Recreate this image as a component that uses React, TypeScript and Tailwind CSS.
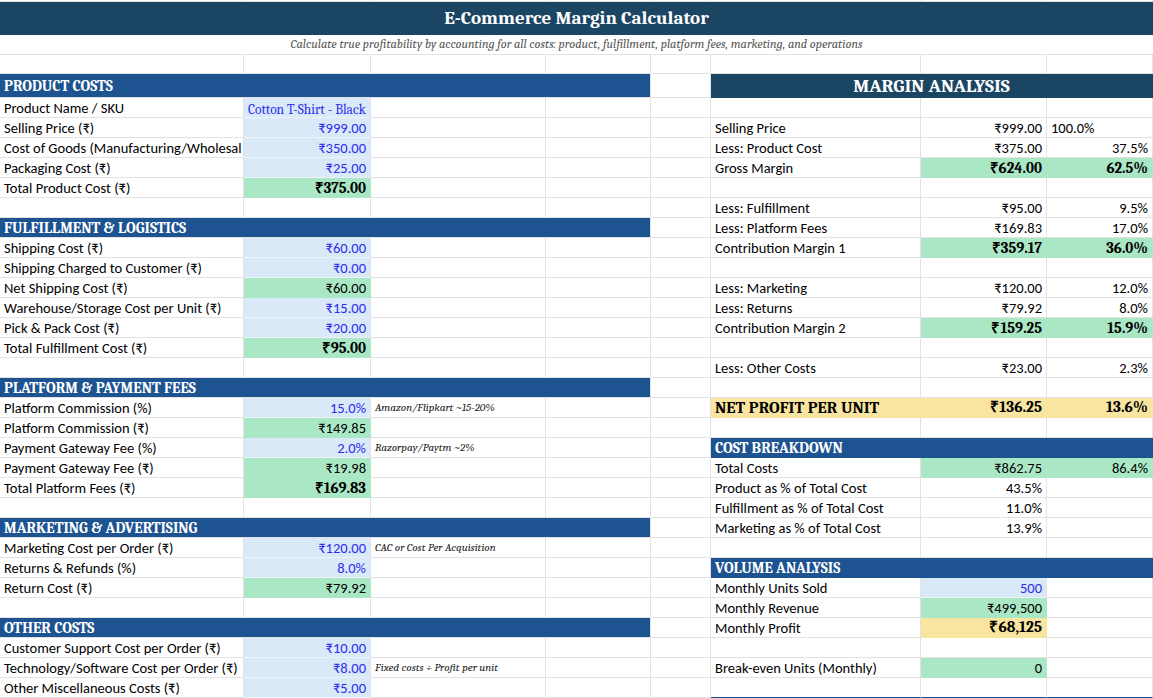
import React from "react";

// ── Grid template (matches sheet column widths) ───────────────────

const COLS =
  "grid grid-cols-[244px_127px_175px_105px_60px_210px_126px_106px]";

type Kind =
  | ""
  | "l"
  | "i"
  | "is"
  | "c"
  | "t"
  | "n"
  | "v"
  | "vl"
  | "h"
  | "rh"
  | "mh"
  | "y"
  | "yv"
  | "end";

type C = [Kind, string?];

const BASE =
  "flex items-center overflow-hidden whitespace-nowrap px-1 pt-[1px] border-r border-b";
const SERIF = "font-[Caladea,'Liberation_Serif',serif]";

const KIND: Record<Kind, string> = {
  "": "border-[#e2e2e2]",
  l: "border-[#e2e2e2] text-black",
  i: "bg-[#d9e9f7] border-r-[#e2e2e2] border-b-[#edf3f9] justify-end text-[#2d2df0]",
  is: `bg-[#d9e9f7] border-r-[#e2e2e2] border-b-[#edf3f9] pt-[4px] text-[#2d2df0] text-[13.5px] ${SERIF}`,
  c: "bg-[#aae8c5] border-transparent justify-end text-black",
  t: `bg-[#aae8c5] border-transparent justify-end text-black font-bold text-[15px] ${SERIF}`,
  n: `border-[#e2e2e2] italic text-[11.2px] text-[#222] ${SERIF}`,
  v: "border-[#e2e2e2] justify-end text-black",
  vl: "border-[#e2e2e2] text-black",
  h: `col-span-4 bg-[#1c5390] border-[#e2e2e2] text-white font-bold text-[15px] ${SERIF}`,
  rh: `col-span-3 bg-[#1c5390] border-transparent text-white font-bold text-[15px] ${SERIF}`,
  mh: `col-span-3 bg-[#1a4563] border-transparent justify-center text-white font-bold text-[19px] ${SERIF}`,
  y: `bg-[#f9e5a0] border-transparent text-black font-bold text-[16.5px] ${SERIF}`,
  yv: `bg-[#f9e5a0] border-transparent justify-end text-black font-bold text-[15.5px] ${SERIF}`,
  end: "border-[#e2e2e2] border-b-[#1c5390]",
};

function Cell({ c }: { c: C }) {
  const [kind, text] = c;
  return <div className={`${BASE} ${KIND[kind]}`}>{text}</div>;
}

// ── Row builders ──────────────────────────────────────────────────

const E: C = [""];

const blankL = (): C[] => [E, E, E, E, E];
const hdrL = (t: string): C[] => [["h", t], E];
const rowL = (label: string, value: C, note?: string): C[] => [
  ["l", label],
  value,
  note ? ["n", note] : E,
  E,
  E,
];

const blankR = (): C[] => [E, E, E];
const rowR = (label: string, g: C, h: C = E): C[] => [["l", label], g, h];

// ── Data ──────────────────────────────────────────────────────────

const LEFT: C[][] = [
  rowL("Product Name / SKU", ["is", "Cotton T-Shirt - Black"]),
  rowL("Selling Price (₹)", ["i", "₹999.00"]),
  // label is cut by the input cell in the sheet
  rowL("Cost of Goods (Manufacturing/Wholesal", ["i", "₹350.00"]),
  rowL("Packaging Cost (₹)", ["i", "₹25.00"]),
  rowL("Total Product Cost (₹)", ["t", "₹375.00"]),
  blankL(),
  hdrL("FULFILLMENT & LOGISTICS"),
  rowL("Shipping Cost (₹)", ["i", "₹60.00"]),
  rowL("Shipping Charged to Customer (₹)", ["i", "₹0.00"]),
  rowL("Net Shipping Cost (₹)", ["c", "₹60.00"]),
  rowL("Warehouse/Storage Cost per Unit (₹)", ["i", "₹15.00"]),
  rowL("Pick & Pack Cost (₹)", ["i", "₹20.00"]),
  rowL("Total Fulfillment Cost (₹)", ["t", "₹95.00"]),
  blankL(),
  hdrL("PLATFORM & PAYMENT FEES"),
  rowL("Platform Commission (%)", ["i", "15.0%"], "Amazon/Flipkart ~15-20%"),
  rowL("Platform Commission (₹)", ["c", "₹149.85"]),
  rowL("Payment Gateway Fee (%)", ["i", "2.0%"], "Razorpay/Paytm ~2%"),
  rowL("Payment Gateway Fee (₹)", ["c", "₹19.98"]),
  rowL("Total Platform Fees (₹)", ["t", "₹169.83"]),
  blankL(),
  hdrL("MARKETING & ADVERTISING"),
  rowL("Marketing Cost per Order (₹)", ["i", "₹120.00"], "CAC or Cost Per Acquisition"),
  rowL("Returns & Refunds (%)", ["i", "8.0%"]),
  rowL("Return Cost (₹)", ["c", "₹79.92"]),
  blankL(),
  hdrL("OTHER COSTS"),
  rowL("Customer Support Cost per Order (₹)", ["i", "₹10.00"]),
  rowL("Technology/Software Cost per Order (₹)", ["i", "₹8.00"], "Fixed costs ÷ Profit per unit"),
  rowL("Other Miscellaneous Costs (₹)", ["i", "₹5.00"]),
];

const RIGHT: C[][] = [
  blankR(),
  rowR("Selling Price", ["v", "₹999.00"], ["vl", "100.0%"]),
  rowR("Less: Product Cost", ["v", "₹375.00"], ["v", "37.5%"]),
  rowR("Gross Margin", ["t", "₹624.00"], ["t", "62.5%"]),
  blankR(),
  rowR("Less: Fulfillment", ["v", "₹95.00"], ["v", "9.5%"]),
  rowR("Less: Platform Fees", ["v", "₹169.83"], ["v", "17.0%"]),
  rowR("Contribution Margin 1", ["t", "₹359.17"], ["t", "36.0%"]),
  blankR(),
  rowR("Less: Marketing", ["v", "₹120.00"], ["v", "12.0%"]),
  rowR("Less: Returns", ["v", "₹79.92"], ["v", "8.0%"]),
  rowR("Contribution Margin 2", ["t", "₹159.25"], ["t", "15.9%"]),
  blankR(),
  rowR("Less: Other Costs", ["v", "₹23.00"], ["v", "2.3%"]),
  blankR(),
  [["y", "NET PROFIT PER UNIT"], ["yv", "₹136.25"], ["yv", "13.6%"]],
  blankR(),
  [["rh", "COST BREAKDOWN"]],
  rowR("Total Costs", ["c", "₹862.75"], ["c", "86.4%"]),
  rowR("Product as % of Total Cost", ["v", "43.5%"]),
  rowR("Fulfillment as % of Total Cost", ["v", "11.0%"]),
  rowR("Marketing as % of Total Cost", ["v", "13.9%"]),
  blankR(),
  [["rh", "VOLUME ANALYSIS"]],
  rowR("Monthly Units Sold", ["i", "500"]),
  rowR("Monthly Revenue", ["c", "₹499,500"]),
  rowR("Monthly Profit", ["yv", "₹68,125"]),
  blankR(),
  rowR("Break-even Units (Monthly)", ["c", "0"]),
  [["end"], ["end"], ["end"]],
];

// ── App ───────────────────────────────────────────────────────────

export default function App() {
  return (
    <div className="w-[1153px] h-[698px] overflow-hidden bg-white font-[Carlito,Lato,'Noto_Sans',sans-serif] text-[14.5px] leading-none">
      {/* strip of the row above */}
      <div className={`${COLS} h-[2px]`}>
        {Array.from({ length: 8 }, (_, i) => (
          <div key={i} className="border-r border-b border-[#e2e2e2]" />
        ))}
      </div>

      {/* Title */}
      <div className={`${COLS} h-[33px]`}>
        <div
          className={`col-span-8 flex items-center justify-center bg-[#1a4563] text-white font-bold text-[19px] ${SERIF}`}
        >
          E-Commerce Margin Calculator
        </div>
      </div>

      {/* Subtitle */}
      <div className={`${COLS} h-[20px]`}>
        <div
          className={`col-span-8 flex items-center justify-center border-b border-[#e2e2e2] italic text-[12.3px] text-[#555] ${SERIF}`}
        >
          Calculate true profitability by accounting for all costs: product, fulfillment, platform fees, marketing, and operations
        </div>
      </div>

      {/* Spacer row */}
      <div className={`${COLS} h-[19px]`}>
        {Array.from({ length: 8 }, (_, i) => (
          <Cell key={i} c={E} />
        ))}
      </div>

      {/* Section headers */}
      <div className={`${COLS} h-[24px]`}>
        <Cell c={["h", "PRODUCT COSTS"]} />
        <Cell c={E} />
        <Cell c={["mh", "MARGIN ANALYSIS"]} />
      </div>

      {LEFT.map((l, r) => (
        <div key={r} className={`${COLS} h-[20px]`}>
          {[...l, ...RIGHT[r]].map((c, i) => (
            <Cell key={i} c={c} />
          ))}
        </div>
      ))}
    </div>
  );
}
